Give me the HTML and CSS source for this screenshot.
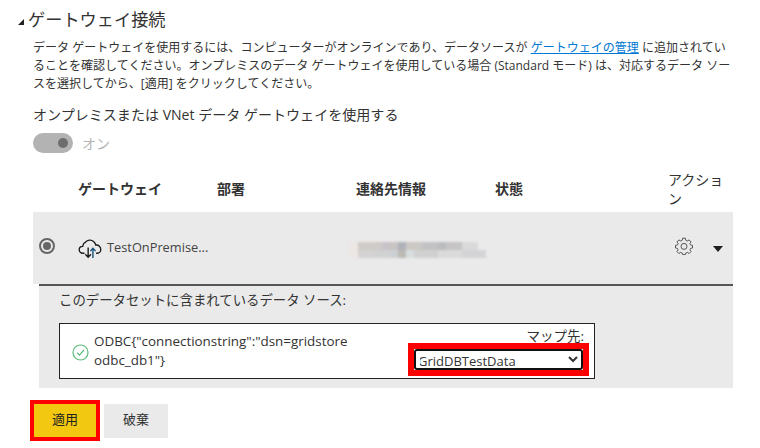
FILE: index.html
```html
<!DOCTYPE html>
<html lang="ja">
<head>
<meta charset="utf-8">
<title>ゲートウェイ接続</title>
<link rel="stylesheet" href="styles.css">
</head>
<body>
<main class="page">
  <h2 class="heading"><span class="caret"></span>ゲートウェイ接続</h2>
  <div class="content">
    <p class="desc">データ ゲートウェイを使用するには、コンピューターがオンラインであり、データソースが <a href="#">ゲートウェイの管理</a> に追加されてい<br>ることを確認してください。オンプレミスのデータ ゲートウェイを使用している場合 (Standard モード) は、対応するデータ ソー<br>スを選択してから、[適用] をクリックしてください。</p>
    <div class="use-label">オンプレミスまたは VNet データ ゲートウェイを使用する</div>
    <div class="toggle-row"><span class="toggle"><span class="knob"></span></span><span class="toggle-text">オン</span></div>
    <div class="thead">
      <div>ゲートウェイ</div><div>部署</div><div>連絡先情報</div><div>状態</div><div class="th-action">アクション</div>
    </div>
    <div class="row">
      <span class="radio"><span class="dot"></span></span>
      <div class="gw">
        <svg class="cloud" width="24" height="20" viewBox="0 1 22.5 19" fill="none" stroke="#1b1b1b" stroke-width="1.3"><path d="M6 14.5H4.5C2.5 14.5 1 13 1 11.2S2.5 8 4.3 8C4.6 5.8 5.6 4.6 7 4C8.7 1.8 12.5 1.3 14.6 3.3C16 4.5 16.5 5.6 16.8 6.8C19.5 6.3 21.5 8.6 21.5 11C21.5 13 20 14.5 18.5 14.5H17"/><path d="M9.5 9V18M6.8 15.5L9.5 18.3L12.2 15.5"/><path d="M14 19V10M11.6 12.5L14 9.8L16.6 12.5" stroke="#14507a"/></svg>
        <span>TestOnPremise...</span>
      </div>
      <div class="blur"></div>
      <svg class="gear" width="18" height="18" viewBox="0 0 18 18" fill="none" stroke="#555" stroke-width="1"><path d="M7.6 1.2H10.4L10.8 3.3L12.3 4L14.1 2.9L16 4.9L14.9 6.6L15.6 8L17.5 8.4V11L15.6 11.4L14.9 12.9L16 14.6L14.1 16.5L12.3 15.4L10.8 16L10.4 17.6H7.6L7.2 16L5.7 15.4L3.9 16.5L2 14.6L3.1 12.9L2.4 11.4L.5 11V8.4L2.4 8L3.1 6.6L2 4.9L3.9 2.9L5.7 4L7.2 3.3Z"/><circle cx="9" cy="9.4" r="3"/></svg>
      <span class="arrow"></span>
    </div>
    <section class="panel">
      <div class="panel-title">このデータセットに含まれているデータ ソース:</div>
      <div class="source">
        <svg class="check" width="17" height="17" viewBox="0 0 17 17" fill="none" stroke="#5fbd7c" stroke-width="1.2"><circle cx="8.5" cy="8.5" r="7.5"/><path d="M5 8.8L7.5 11.2L12 6"/></svg>
        <div class="source-name">ODBC{"connectionstring":"dsn=gridstore<br>odbc_db1"}</div>
        <div class="map">
          <label class="map-label" for="map">マップ先:</label>
          <div class="mark mark-select"><select id="map" class="select"><option>GridDBTestData</option></select></div>
        </div>
      </div>
    </section>
  </div>
  <div class="actions">
    <div class="mark mark-apply"><button class="btn btn-primary">適用</button></div>
    <button class="btn btn-second">破棄</button>
  </div>
</main>
</body>
</html>
```
FILE: styles.css
```css
* { box-sizing: border-box; }
html, body { margin: 0; padding: 0; background: #fff; }
body {
  font-family: "Open Sans", "Noto Sans CJK JP", sans-serif;
  color: #333;
  width: 760px;
  height: 448px;
  overflow: hidden;
}
.page { padding: 9px 0 0 18px; }
.heading {
  margin: 0;
  display: flex;
  align-items: center;
  font-size: 17.2px;
  font-weight: 400;
  line-height: 22px;
  color: #333;
}
.caret {
  width: 0;
  height: 0;
  margin-right: 4px;
  margin-top: 3px;
  border-style: solid;
  border-width: 0 0 6px 6px;
  border-color: transparent transparent #222 transparent;
}
.content { margin: 7px 0 0 15px; width: 700px; }
.desc { margin: 0; padding-top: 1px; font-size: 12.03px; line-height: 18px; white-space: nowrap; }
.desc a { color: #0078d4; text-decoration: underline; }
.use-label { margin-top: 12px; font-size: 14.05px; line-height: 20px; }
.toggle-row { display: flex; align-items: center; margin-top: 8px; height: 20px; }
.toggle {
  width: 40px;
  height: 20px;
  border-radius: 10px;
  background: #b3b3b3;
  display: flex;
  align-items: center;
  justify-content: flex-end;
  padding-right: 5px;
}
.knob { width: 10px; height: 10px; border-radius: 50%; background: #6e6e6e; }
.toggle-text { margin-left: 9px; font-size: 14px; color: #b5b5b5; }
.thead {
  display: grid;
  grid-template-columns: 139px 139px 139px 173px 65px;
  height: 45px;
  margin-top: 14px;
  padding-left: 45px;
  padding-bottom: 3px;
  font-size: 14px;
  font-weight: 600;
  color: #333;
  align-items: center;
}
.thead > div { line-height: 19px; }
.th-action { font-weight: 400; align-self: start; width: 56px; margin-top: 3px; line-height: 19px; }
.row {
  height: 72px;
  background: #eaeaea;
  display: flex;
  align-items: center;
  padding-left: 6px;
}
.radio {
  width: 16px;
  height: 16px;
  border-radius: 50%;
  border: 2px solid #666;
  display: flex;
  align-items: center;
  justify-content: center;
  margin-top: -4px;
}
.dot { width: 8px; height: 8px; border-radius: 50%; background: #666; }
.gw { display: flex; align-items: center; margin-left: 23px; width: 272px; font-size: 12.8px; color: #444; gap: 5px; }
.gw span { margin-top: -2px; }
.cloud { flex: none; margin-top: 2px; }
.blur {
  width: 136px;
  height: 16px;
  margin-top: 3px;
  filter: blur(1px);
  background:
    linear-gradient(90deg, #ece6e4 0 8px, #cfcbc8 8px 32px, #c8c2ca 32px 40px, #c8c4c2 40px 48px, #b0b2ba 48px 56px, #ccc8c4 56px 72px, #c2c2c4 72px 88px, #babcc0 88px 96px, #c6c4c4 96px 112px, #dadada 112px 128px, #eaeaea 128px) top / 100% 50% no-repeat,
    linear-gradient(90deg, #ece6e4 0 8px, #d4d2d2 8px 24px, #d0d2d2 24px 40px, #ccd0d4 40px 48px, #bdbab4 48px 56px, #d8dee0 56px 64px, #d0d0d0 64px 88px, #dadada 88px 112px, #d4d4d6 112px 136px) bottom / 100% 50% no-repeat;
}
.gear { margin-left: 189px; flex: none; margin-top: -4px; }
.arrow {
  width: 0;
  height: 0;
  margin-left: 20px;
  margin-top: 2px;
  border-style: solid;
  border-width: 6px 5.5px 0 5.5px;
  border-color: #1f1f1f transparent transparent transparent;
}
.panel {
  margin-left: 6px;
  height: 104px;
  background: #eaeaea;
  border-top: 2px solid #555;
  padding: 5px 0 0 20px;
}
.panel-title { font-size: 13.4px; line-height: 18px; }
.source {
  margin-top: 14px;
  width: 536px;
  height: 56px;
  border: 1px solid #222;
  background: #fff;
  display: flex;
  align-items: center;
  padding-left: 12px;
}
.check { flex: none; margin-top: 2px; }
.source-name { margin-left: 5px; font-size: 13.4px; line-height: 19px; white-space: nowrap; }
.map { margin-left: auto; margin-right: 5px; display: flex; flex-direction: column; align-items: flex-end; }
.map-label { font-size: 13.5px; line-height: 16px; margin-right: 5px; margin-top: 2px; margin-bottom: -1px; }
.mark { border: 6px solid #f00; background: #fff; }
.mark-select { width: 181px; height: 33px; }
.select {
  display: block;
  width: 169px;
  height: 21px;
  border: 2px solid #111;
  border-radius: 3px;
  background: #fff;
  color: #333;
  font: 13px "Open Sans", "Noto Sans CJK JP", sans-serif;
  padding: 0;
  text-indent: -2px;
}
.actions { display: flex; align-items: center; gap: 4px; margin-top: 12px; margin-left: 12px; }
.mark-apply { border-width: 4px; width: 70px; height: 41px; }
.btn {
  border: 0;
  display: block;
  font: 13px "Noto Sans CJK JP", sans-serif;
  color: #333;
  padding: 0 0 5px;
}
.btn-primary { width: 62px; height: 33px; background: #f2c811; color: #222; }
.btn-second { width: 64px; height: 34px; background: #eaeaea; }
```
